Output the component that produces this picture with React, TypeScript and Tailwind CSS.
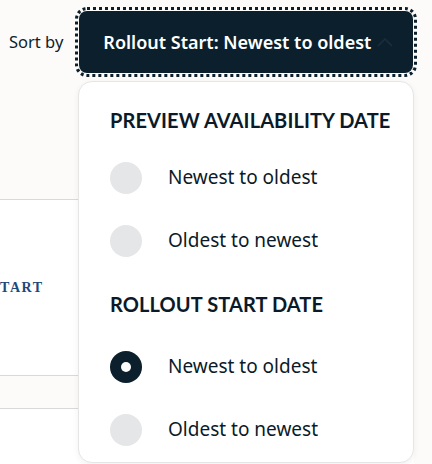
import React from "react";

const Radio = ({ checked }: { checked?: boolean }) =>
  checked ? (
    <span className="flex h-[32px] w-[32px] shrink-0 items-center justify-center rounded-full bg-[#0b1f2d]">
      <span className="h-[10px] w-[10px] rounded-full bg-white" />
    </span>
  ) : (
    <span className="h-[32px] w-[32px] shrink-0 rounded-full bg-[#e5e6e8]" />
  );

const Option = ({ label, checked }: { label: string; checked?: boolean }) => (
  <div className="flex h-[63px] items-center">
    <Radio checked={checked} />
    <span className="ml-[26px] text-[19px] text-[#0b1a28] [font-family:'Noto_Sans',sans-serif]">{label}</span>
  </div>
);

const Heading = ({ children, h }: { children: React.ReactNode; h: string }) => (
  <div className={`flex items-center ${h}`}>
    <span className="text-[20px] font-bold tracking-[0.1px] text-[#0b1a28] [font-family:Lato,sans-serif]">{children}</span>
  </div>
);

export default function App() {
  return (
    <div className="relative h-[464px] w-[432px] overflow-hidden bg-[#fcfbf9] [font-family:'Noto_Sans',sans-serif]">
      <div className="flex items-center pl-[9px] pt-[11px]">
        <span className="mr-[16px] text-[16.5px] text-[#0b1f2d]">Sort by</span>
        <button className="flex h-[62px] w-[334px] items-center justify-between rounded-[8px] bg-[#0b1f2d] pl-[24px] pr-[20px] outline-[3px] outline-offset-1 outline-dotted outline-[#0b1f2d]">
          <span className="text-[18px] font-semibold text-white">Rollout Start: Newest to oldest</span>
          <svg width="16" height="10" viewBox="0 0 16 10" fill="none">
            <path d="M1 9 L8 2 L15 9" stroke="#1a2e3c" strokeWidth="1.5" />
          </svg>
        </button>
      </div>

      <div className="mt-[126px] w-[414px]">
        <div className="flex h-[177px] items-center border-y border-[#d9d9d9] bg-white">
          <span className="text-[14px] font-bold tracking-[1.6px] text-[#1b4a7a] [font-family:'Liberation_Serif',serif]">TART</span>
        </div>
        <div className="h-[32px]" />
        <div className="h-[60px] border-t border-[#d9d9d9] bg-white" />
      </div>

      <div className="absolute left-[78px] top-[81px] h-[382px] w-[336px] rounded-[14px] border border-[#e6e6e6] bg-white pl-[31px] pt-[12px] shadow-[0_2px_6px_rgba(0,0,0,0.06)]">
        <Heading h="h-[52px]">PREVIEW AVAILABILITY DATE</Heading>
        <Option label="Newest to oldest" />
        <Option label="Oldest to newest" />
        <Heading h="h-[63px]">ROLLOUT START DATE</Heading>
        <Option label="Newest to oldest" checked />
        <Option label="Oldest to newest" />
      </div>
    </div>
  );
}
